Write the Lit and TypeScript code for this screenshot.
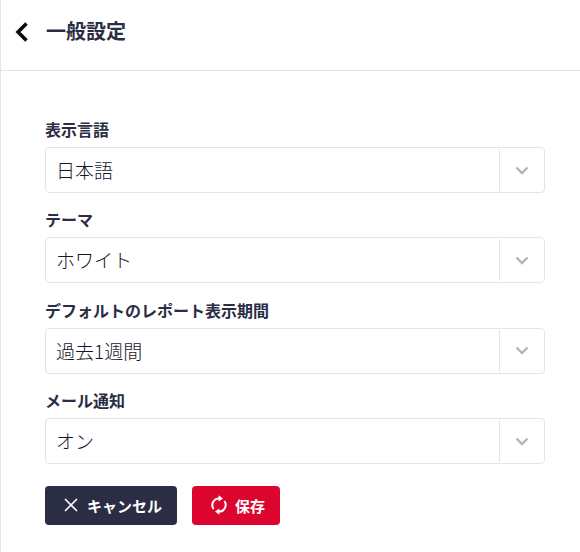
import { LitElement, html, css } from "lit";
import { customElement } from "lit/decorators.js";

const fields = [
  { label: "表示言語", value: "日本語" },
  { label: "テーマ", value: "ホワイト" },
  { label: "デフォルトのレポート表示期間", value: "過去1週間" },
  { label: "メール通知", value: "オン" },
];

@customElement("app-root")
export class AppRoot extends LitElement {
  static styles = css`
    :host {
      display: block;
      width: 580px;
      height: 552px;
      box-sizing: border-box;
      overflow: hidden;
      background: #fff;
      border-left: 1px solid #e6e6e6;
      font-family: Inter, "Noto Sans CJK JP", sans-serif;
      color: #2a2d43;
    }
    .header {
      height: 71px;
      box-sizing: border-box;
      border-bottom: 1px solid #e4e4e4;
      display: flex;
      align-items: center;
      gap: 17px;
      padding: 0 0 6px 12px;
    }
    .back { width: 16px; height: 22px; display: block; }
    h1 { margin: 0; font-size: 20px; line-height: 24px; font-weight: 700; }
    .content {
      padding: 49px 35px 0 44px;
      display: flex;
      flex-direction: column;
    }
    .field { display: flex; flex-direction: column; gap: 7px; margin-bottom: 17.400px; }
    label { font-size: 16px; line-height: 20px; font-weight: 700; height: 20px; }
    .select {
      height: 46px;
      box-sizing: border-box;
      border: 1px solid #e4e4e4;
      border-radius: 4px;
      display: flex;
      align-items: center;
    }
    .value {
      flex: 1;
      padding: 0 0 1px 10px;
      font-family: "Noto Sans CJK JP", sans-serif;
      font-size: 19px;
      font-weight: 300;
      color: #14162a;
    }
    .arrow {
      width: 44px;
      align-self: stretch;
      margin: 1px 0;
      border-left: 1px solid #e4e4e4;
      display: flex;
      align-items: center;
      justify-content: center;
    }
    .arrow svg { width: 14px; height: 9px; }
    .actions { display: flex; gap: 15px; margin-top: 4px; }
    button {
      height: 39px;
      border: 0;
      border-radius: 4px;
      color: #fff;
      font: 700 15px Inter, "Noto Sans CJK JP", sans-serif;
      display: flex;
      align-items: center;
      justify-content: center;
      padding: 0;
    }
    .cancel { width: 132px; background: #2a2d43; gap: 9px; padding-left: 4px; }
    .save { width: 88px; background: #dc052d; gap: 8px; padding-left: 4px; }
    button svg { display: block; }
  `;

  render() {
    return html`
      <div class="header">
        <svg class="back" viewBox="0 0 16 22" fill="none" stroke="#0a0a0a" stroke-width="3.600">
          <path d="M13.500 2.500 5 11l8.500 8.500" />
        </svg>
        <h1>一般設定</h1>
      </div>
      <div class="content">
        ${fields.map(
          (f) => html`
            <div class="field">
              <label>${f.label}</label>
              <div class="select">
                <span class="value">${f.value}</span>
                <span class="arrow">
                  <svg viewBox="0 0 14 9" fill="none" stroke="#b4b4b4" stroke-width="2.400">
                    <path d="M1.500 1.500 7 7l5.500-5.500" />
                  </svg>
                </span>
              </div>
            </div>
          `
        )}
        <div class="actions">
          <button class="cancel">
            <svg width="14" height="14" viewBox="0 0 14 14" fill="none" stroke="#fff" stroke-width="1.600">
              <path d="M1 1l12 12M13 1 1 13" />
            </svg>
            キャンセル
          </button>
          <button class="save">
            <svg width="16" height="20" viewBox="0 0 16 20" fill="none" stroke="#fff" stroke-width="2">
              <path d="M2.600 14A6.700 6.700 0 0 1 8 3.400" />
              <path d="M13.400 6A6.700 6.700 0 0 1 8 16.600" />
              <path d="M7.600 0.200 12 3.400 7.600 6.600z" fill="#fff" stroke="none" />
              <path d="M8.400 13.400 4 16.600 8.400 19.800z" fill="#fff" stroke="none" />
            </svg>
            保存
          </button>
        </div>
      </div>
    `;
  }
}
